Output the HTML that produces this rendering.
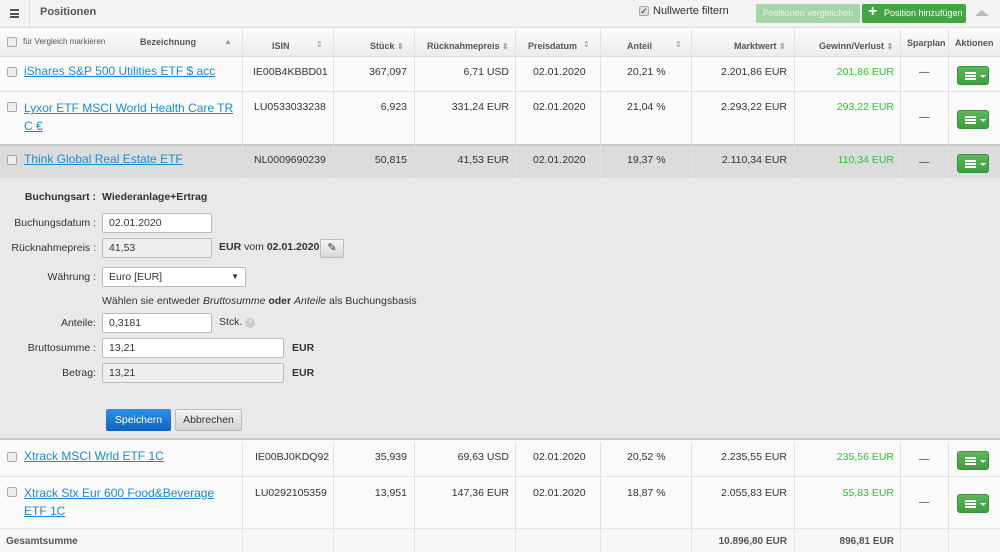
<!DOCTYPE html>
<html><head><meta charset="utf-8"><style>
*{box-sizing:border-box;margin:0;padding:0}
body{width:1000px;height:552px;overflow:hidden;font-family:"Liberation Sans",sans-serif;font-size:10.5px;color:#333;background:#fafafa;position:relative}
.a{position:absolute}
.t{position:absolute;white-space:nowrap}
.r{text-align:right}
a{color:#1a8ccf;text-decoration:underline;font-size:12px}
.cb{position:absolute;width:10px;height:10px;border:1px solid #aaa;border-radius:2px;background:#eee}
.vl{position:absolute;width:1px;background:#e2e2e2}
.hl{position:absolute;height:1px;left:0;width:1000px;background:#ddd}
.th{font-weight:bold;font-size:9px;color:#555}
.g{color:#2dc52d}
.btn{position:absolute;width:32px;height:19px;background:linear-gradient(#5cb85c,#3f9e3f);border-radius:3px;border:1px solid #3a8f3a}
.btn i{position:absolute;left:7px;top:5px;width:11px;height:8px;border-top:2px solid #fff;border-bottom:2px solid #fff}
.btn i:after{content:"";position:absolute;left:0;top:1px;width:11px;height:2px;background:#fff}
.btn b{position:absolute;left:22px;top:8px;border:3px solid transparent;border-top:3px solid #fff}
.in{position:absolute;height:20px;border:1px solid #bbb;border-radius:2px;background:#fff;padding:3px 6px;font-size:10.5px}
.dis{background:#efefef}
.lbl{position:absolute;text-align:right;font-size:10.5px;color:#333;white-space:nowrap}
.sort{color:#999;font-size:8px}
</style></head><body>
<div class="a" style="left:0;top:0;width:1000px;height:28px;background:#f3f3f3;border-bottom:1px solid #ddd"></div>
<div class="a" style="left:29px;top:0;width:1px;height:28px;background:#ddd"></div>
<div class="a" style="left:10px;top:9px;width:9px;height:9px;border-top:2px solid #555;border-bottom:2px solid #555"></div>
<div class="a" style="left:10px;top:12.5px;width:9px;height:2px;background:#555"></div>
<div class="t" style="left:40px;top:6px;font-weight:bold;color:#555;font-size:11px">Positionen</div>
<div class="cb" style="left:639px;top:6px;background:#ddd;font-size:9px;line-height:8px;text-align:center;color:#333">✓</div>
<div class="t" style="left:653px;top:5px;color:#333;font-size:11px">Nullwerte filtern</div>
<div class="a" style="left:756px;top:4px;width:104px;height:19px;background:#a6d6a6;border-radius:2px;color:#e8f5e8;font-size:9px;text-align:center;line-height:19px">Positionen vergleichen</div>
<div class="a" style="left:862px;top:4px;width:104px;height:19px;background:#45a545;border-radius:2px;color:#fff;font-size:9px;line-height:19px;padding-left:22px">Position hinzufügen</div>
<div class="t" style="left:868px;top:3px;color:#fff;font-size:16px;font-weight:bold">+</div>
<div class="a" style="left:975px;top:10px;border:7px solid transparent;border-bottom:6px solid #bbb;border-top:0"></div>
<div class="a" style="left:0;top:29px;width:1000px;height:28px;background:linear-gradient(#fcfcfc,#ececec);border-bottom:1px solid #ddd"></div>
<div class="cb" style="left:7px;top:37px"></div>
<div class="t" style="left:23px;top:37px;font-size:8px;color:#555">für Vergleich markieren</div>
<div class="t th" style="left:140px;top:37px">Bezeichnung</div>
<div class="t sort" style="left:224px;top:37px">▲</div>
<div class="t th" style="left:272px;top:41px">ISIN</div><div class="t sort" style="left:316px;top:40px">⇕</div>
<div class="t th" style="left:370px;top:41px">Stück <span class="sort">⇕</span></div>
<div class="t th" style="left:427px;top:41px">Rücknahmepreis <span class="sort">⇕</span></div>
<div class="t th" style="left:528px;top:41px">Preisdatum</div><div class="t sort" style="left:583px;top:40px">⇕</div>
<div class="t th" style="left:627px;top:41px">Anteil</div><div class="t sort" style="left:675px;top:40px">⇕</div>
<div class="t th" style="left:734px;top:41px">Marktwert <span class="sort">⇕</span></div>
<div class="t th" style="left:819px;top:41px">Gewinn/Verlust <span class="sort">⇕</span></div>
<div class="t th" style="left:907px;top:38px">Sparplan</div>
<div class="t th" style="left:955px;top:38px">Aktionen</div>
<div class="a" style="left:0;top:144px;width:1000px;height:34px;background:#dcdcdc;border-top:2px solid #c8c8c8"></div>
<div class="a" style="left:0;top:178px;width:1000px;height:262px;background:#e9e9e9;border-bottom:2px solid #ccc"></div>
<div class="hl" style="top:91px"></div><div class="hl" style="top:476px;background:#e6e6e6"></div><div class="hl" style="top:528px;background:#e6e6e6"></div>
<div class="vl" style="left:242px;top:29px;height:148px"></div><div class="vl" style="left:333px;top:29px;height:148px"></div><div class="vl" style="left:414px;top:29px;height:148px"></div><div class="vl" style="left:515px;top:29px;height:148px"></div><div class="vl" style="left:600px;top:29px;height:148px"></div><div class="vl" style="left:691px;top:29px;height:148px"></div><div class="vl" style="left:794px;top:29px;height:148px"></div><div class="vl" style="left:900px;top:29px;height:148px"></div><div class="vl" style="left:948px;top:29px;height:148px"></div>
<div class="vl" style="left:242px;top:442px;height:110px"></div><div class="vl" style="left:333px;top:442px;height:110px"></div><div class="vl" style="left:414px;top:442px;height:110px"></div><div class="vl" style="left:515px;top:442px;height:110px"></div><div class="vl" style="left:600px;top:442px;height:110px"></div><div class="vl" style="left:691px;top:442px;height:110px"></div><div class="vl" style="left:794px;top:442px;height:110px"></div><div class="vl" style="left:900px;top:442px;height:110px"></div><div class="vl" style="left:948px;top:442px;height:110px"></div>

<div class="cb" style="left:7px;top:67px"></div>
<div class="t" style="left:24px;top:64px"><a>iShares S&amp;P 500 Utilities ETF $ acc</a></div>
<div class="t" style="left:253px;top:66px">IE00B4KBBD01</div>
<div class="t r" style="right:593px;top:66px">367,097</div>
<div class="t r" style="right:491px;top:66px">6,71 USD</div>
<div class="t" style="left:533px;top:66px">02.01.2020</div>
<div class="t" style="left:627px;top:66px">20,21 %</div>
<div class="t r" style="right:213px;top:66px">2.201,86 EUR</div>
<div class="t r g" style="right:106px;top:66px">201,86 EUR</div>
<div class="t" style="left:919px;top:66px">—</div>
<div class="btn" style="left:957px;top:66px"><i></i><b></b></div>

<div class="cb" style="left:7px;top:102px"></div>
<div class="t" style="left:24px;top:100px;line-height:17px"><a>Lyxor ETF MSCI World Health Care TR<br>C €</a></div>
<div class="t" style="left:254px;top:101px">LU0533033238</div>
<div class="t r" style="right:593px;top:101px">6,923</div>
<div class="t r" style="right:491px;top:101px">331,24 EUR</div>
<div class="t" style="left:533px;top:101px">02.01.2020</div>
<div class="t" style="left:627px;top:101px">21,04 %</div>
<div class="t r" style="right:213px;top:101px">2.293,22 EUR</div>
<div class="t r g" style="right:106px;top:101px">293,22 EUR</div>
<div class="t" style="left:919px;top:111px">—</div>
<div class="btn" style="left:957px;top:110px"><i></i><b></b></div>

<div class="cb" style="left:7px;top:155px"></div>
<div class="t" style="left:24px;top:152px"><a>Think Global Real Estate ETF</a></div>
<div class="t" style="left:254px;top:154px">NL0009690239</div>
<div class="t r" style="right:593px;top:154px">50,815</div>
<div class="t r" style="right:491px;top:154px">41,53 EUR</div>
<div class="t" style="left:533px;top:154px">02.01.2020</div>
<div class="t" style="left:627px;top:154px">19,37 %</div>
<div class="t r" style="right:213px;top:154px">2.110,34 EUR</div>
<div class="t r g" style="right:106px;top:154px">110,34 EUR</div>
<div class="t" style="left:919px;top:156px">—</div>
<div class="btn" style="left:957px;top:154px"><i></i><b></b></div>

<div class="lbl" style="right:904px;top:191px;font-weight:bold">Buchungsart :</div>
<div class="t" style="left:102px;top:191px;font-weight:bold">Wiederanlage+Ertrag</div>
<div class="lbl" style="right:904px;top:217px">Buchungsdatum :</div>
<div class="in" style="left:102px;top:213px;width:110px">02.01.2020</div>
<div class="lbl" style="right:904px;top:242px">Rücknahmepreis :</div>
<div class="in dis" style="left:102px;top:238px;width:110px">41,53</div>
<div class="t" style="left:219px;top:241px"><b>EUR</b> vom <b>02.01.2020</b></div>
<div class="a" style="left:320px;top:239px;width:24px;height:19px;border:1px solid #bbb;border-radius:2px;background:linear-gradient(#f5f5f5,#d8d8d8);text-align:center;font-size:11px;line-height:17px">✎</div>
<div class="lbl" style="right:904px;top:271px">Währung :</div>
<div class="in" style="left:102px;top:267px;width:144px">Euro [EUR]<span style="position:absolute;right:6px;top:4px;font-size:8px">▼</span></div>
<div class="t" style="left:102px;top:295px">Wählen sie entweder <i>Bruttosumme</i> <b>oder</b> <i>Anteile</i> als Buchungsbasis</div>
<div class="lbl" style="right:904px;top:317px">Anteile:</div>
<div class="in" style="left:102px;top:313px;width:110px">0,3181</div>
<div class="t" style="left:219px;top:316px">Stck.</div>
<div class="a" style="left:245px;top:318px;width:10px;height:10px;border-radius:50%;background:#ccc;color:#fff;font-size:7px;text-align:center;line-height:10px">i</div>
<div class="lbl" style="right:904px;top:342px">Bruttosumme :</div>
<div class="in" style="left:102px;top:338px;width:182px">13,21</div>
<div class="t" style="left:292px;top:342px;font-weight:bold">EUR</div>
<div class="lbl" style="right:904px;top:367px">Betrag:</div>
<div class="in dis" style="left:102px;top:363px;width:182px">13,21</div>
<div class="t" style="left:292px;top:367px;font-weight:bold">EUR</div>
<div class="a" style="left:106px;top:409px;width:65px;height:22px;background:linear-gradient(#2f8fe0,#0a63c4);border-radius:2px;color:#fff;text-align:center;line-height:22px">Speichern</div>
<div class="a" style="left:175px;top:409px;width:67px;height:22px;background:linear-gradient(#f3f3f3,#d3d3d3);border:1px solid #bbb;border-radius:2px;color:#333;text-align:center;line-height:20px">Abbrechen</div>

<div class="cb" style="left:7px;top:452px"></div>
<div class="t" style="left:24px;top:449px"><a>Xtrack MSCI Wrld ETF 1C</a></div>
<div class="t" style="left:255px;top:451px">IE00BJ0KDQ92</div>
<div class="t r" style="right:593px;top:451px">35,939</div>
<div class="t r" style="right:491px;top:451px">69,63 USD</div>
<div class="t" style="left:533px;top:451px">02.01.2020</div>
<div class="t" style="left:627px;top:451px">20,52 %</div>
<div class="t r" style="right:213px;top:451px">2.235,55 EUR</div>
<div class="t r g" style="right:106px;top:451px">235,56 EUR</div>
<div class="t" style="left:919px;top:453px">—</div>
<div class="btn" style="left:957px;top:451px"><i></i><b></b></div>

<div class="cb" style="left:7px;top:487px"></div>
<div class="t" style="left:24px;top:485px;line-height:17px"><a>Xtrack Stx Eur 600 Food&amp;Beverage<br>ETF 1C</a></div>
<div class="t" style="left:255px;top:487px">LU0292105359</div>
<div class="t r" style="right:593px;top:487px">13,951</div>
<div class="t r" style="right:491px;top:487px">147,36 EUR</div>
<div class="t" style="left:533px;top:487px">02.01.2020</div>
<div class="t" style="left:627px;top:487px">18,87 %</div>
<div class="t r" style="right:213px;top:487px">2.055,83 EUR</div>
<div class="t r g" style="right:106px;top:487px">55,83 EUR</div>
<div class="t" style="left:919px;top:496px">—</div>
<div class="btn" style="left:957px;top:494px"><i></i><b></b></div>

<div class="a" style="left:0;top:529px;width:1000px;height:23px;background:#f7f7f7"></div>
<div class="t" style="left:6px;top:536px;font-weight:bold;font-size:10px;color:#555">Gesamtsumme</div>
<div class="t r" style="right:213px;top:536px;font-weight:bold;font-size:10px;color:#555">10.896,80 EUR</div>
<div class="t r" style="right:106px;top:536px;font-weight:bold;font-size:10px;color:#555">896,81 EUR</div>
<div class="vl" style="left:242px;top:529px;height:23px"></div><div class="vl" style="left:333px;top:529px;height:23px"></div><div class="vl" style="left:414px;top:529px;height:23px"></div><div class="vl" style="left:515px;top:529px;height:23px"></div><div class="vl" style="left:600px;top:529px;height:23px"></div><div class="vl" style="left:691px;top:529px;height:23px"></div><div class="vl" style="left:794px;top:529px;height:23px"></div><div class="vl" style="left:900px;top:529px;height:23px"></div><div class="vl" style="left:948px;top:529px;height:23px"></div>
</body></html>
